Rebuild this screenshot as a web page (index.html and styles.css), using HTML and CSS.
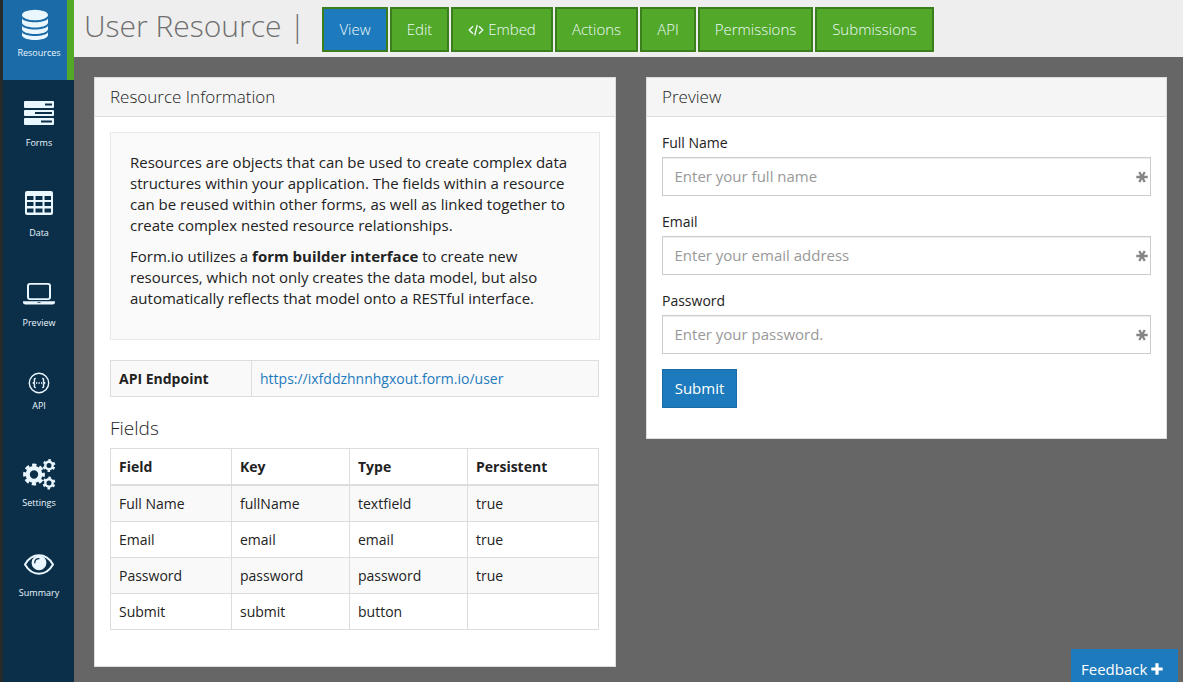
FILE: index.html
```html
<!DOCTYPE html>
<html lang="en">
<head>
<meta charset="utf-8">
<title>User Resource</title>
<link rel="stylesheet" href="styles.css">
</head>
<body>
<div class="app">
  <nav class="sidebar">
    <a class="side-item active">
      <svg class="icon" width="32" height="32" viewBox="0 0 32 32" fill="currentColor"><ellipse cx="16" cy="6" rx="13" ry="5.200"/><path d="M3 9.500c3 5 23 5 26 0V14c-2 6-24 6-26 0zM3 16.700c3 5 23 5 26 0v3.800c-2 6-24 6-26 0zM3 23.200c3 5 23 5 26 0v3.300c-2 6-24 6-26 0z"/></svg>
      <span>Resources</span>
    </a>
    <a class="side-item">
      <svg class="icon" width="32" height="32" viewBox="0 0 32 32" fill="currentColor" fill-rule="evenodd"><path d="M2 4h28q1 0 1 1v5q0 1-1 1H2q-1 0-1-1V5q0-1 1-1zM22 6.500v2h7v-2zM2 13h28q1 0 1 1v4q0 1-1 1H2q-1 0-1-1v-4q0-1 1-1zM12 15v2h17v-2zM2 21h28q1 0 1 1v5q0 1-1 1H2q-1 0-1-1v-5q0-1 1-1zM18 23.500v2h11v-2z"/></svg>
      <span>Forms</span>
    </a>
    <a class="side-item">
      <svg class="icon" width="32" height="32" viewBox="0 0 32 32" fill="currentColor" fill-rule="evenodd"><path d="M4 4h24q2 0 2 2v20q0 2-2 2H4q-2 0-2-2V6q0-2 2-2zM4 9v4h6.500V9zM12.500 9v4h7V9zM21.500 9v4H28V9zM4 15v4h6.500v-4zM12.500 15v4h7v-4zM21.500 15v4H28v-4zM4 21.500v4h6.500v-4zM12.500 21.500v4h7v-4zM21.500 21.500v4H28v-4z"/></svg>
      <span>Data</span>
    </a>
    <a class="side-item">
      <svg class="icon" width="32" height="32" viewBox="0 0 32 32" fill="currentColor" fill-rule="evenodd"><path d="M7 6h18q3 0 3 3v11q0 3-3 3H7q-3 0-3-3V9q0-3 3-3zM7 7.700Q6 7.700 6 9v11q0 1.300 1 1.300h18q1 0 1-1.300V9q0-1.300-1-1.300zM0 24.300h32v1.200q0 2-2.500 2h-27Q0 27.500 0 25.500zM14.500 25.200v.8h3v-.8z"/></svg>
      <span>Preview</span>
    </a>
    <a class="side-item side-api">
      <svg class="icon" width="22" height="22" viewBox="0 0 22 22" fill="none" stroke="currentColor" stroke-width="1.400"><circle cx="11" cy="11" r="9.700"/><path d="M7.800 6.500C5.800 6.500 6.500 8 6.500 9.200S6 11 4.700 11c1.300 0 1.800.6 1.800 1.800s-.7 2.700 1.300 2.700M14.200 6.500c2 0 1.300 1.500 1.300 2.700S16 11 17.300 11c-1.300 0-1.800.6-1.800 1.800s.7 2.700-1.300 2.700"/><path d="M8 11h6.500" stroke-dasharray="1.300 1.200"/></svg>
      <span>API</span>
    </a>
    <a class="side-item side-settings">
      <svg class="icon" width="34" height="32" viewBox="0 0 34 32" fill="none" stroke="currentColor">
        <circle cx="12" cy="16.500" r="6.300" stroke-width="4.200"/><circle cx="12" cy="16.500" r="9.200" stroke-width="3.400" stroke-dasharray="4.200 3.026" stroke-dashoffset="2.100"/>
        <circle cx="27" cy="7.500" r="3.700" stroke-width="2.400"/><circle cx="27" cy="7.500" r="5.400" stroke-width="2" stroke-dasharray="2.600 3.055" stroke-dashoffset="-1.500"/>
        <circle cx="27" cy="25" r="3.700" stroke-width="2.400"/><circle cx="27" cy="25" r="5.400" stroke-width="2" stroke-dasharray="2.600 3.055" stroke-dashoffset="-1.500"/>
      </svg>
      <span>Settings</span>
    </a>
    <a class="side-item side-summary">
      <svg class="icon" width="32" height="32" viewBox="0 0 32 32" fill="none" stroke="currentColor"><path d="M2 16.500C9 4.200 23 4.200 30 16.500 23 28.800 9 28.800 2 16.500z" stroke-width="2"/><circle cx="16" cy="14.800" r="7.400" fill="currentColor" stroke="none"/><path class="glint" d="M11.800 14.800q0-4.200 4.200-4.200" stroke-width="1.300" stroke-linecap="round"/></svg>
      <span>Summary</span>
    </a>
  </nav>
  <div class="main">
    <header class="topbar">
      <h1>User Resource |</h1>
      <div class="tabs">
        <a class="tab current w-view">View</a>
        <a class="tab w-edit">Edit</a>
        <a class="tab w-embed"><svg width="16" height="12" viewBox="0 0 16 12" fill="none" stroke="currentColor" stroke-width="1.300"><path d="M5 2.200L1.200 6 5 9.800M11 2.200L14.800 6 11 9.800M9.300 .8L6.700 11.500"/></svg><span>Embed</span></a>
        <a class="tab w-actions">Actions</a>
        <a class="tab w-api">API</a>
        <a class="tab w-perm">Permissions</a>
        <a class="tab w-sub">Submissions</a>
      </div>
    </header>
    <main class="content">
      <section class="panel info">
        <h2 class="panel-head">Resource Information</h2>
        <div class="panel-body">
          <div class="well">
            <p>Resources are objects that can be used to create complex data<br>structures within your application. The fields within a resource<br>can be reused within other forms, as well as linked together to<br>create complex nested resource relationships.</p>
            <p>Form.io utilizes a <strong>form builder interface</strong> to create new<br>resources, which not only creates the data model, but also<br>automatically reflects that model onto a RESTful interface.</p>
          </div>
          <div class="endpoint"><strong>API Endpoint</strong><a>https://ixfddzhnnhgxout.form.io/user</a></div>
          <h3>Fields</h3>
          <div class="grid">
            <b>Field</b><b>Key</b><b>Type</b><b>Persistent</b>
            <span class="odd">Full Name</span><span class="odd">fullName</span><span class="odd">textfield</span><span class="odd">true</span>
            <span>Email</span><span>email</span><span>email</span><span>true</span>
            <span class="odd">Password</span><span class="odd">password</span><span class="odd">password</span><span class="odd">true</span>
            <span>Submit</span><span>submit</span><span>button</span><span></span>
          </div>
        </div>
      </section>
      <section class="panel preview">
        <h2 class="panel-head">Preview</h2>
        <form class="panel-body">
          <label>Full Name</label>
          <div class="field"><input placeholder="Enter your full name"><svg class="star" width="12" height="12" viewBox="0 0 12 12" stroke="currentColor" stroke-width="2.300"><path d="M.3 6h11.400M3.300 1l5.400 10M8.700 1L3.300 11"/></svg></div>
          <label>Email</label>
          <div class="field"><input placeholder="Enter your email address"><svg class="star" width="12" height="12" viewBox="0 0 12 12" stroke="currentColor" stroke-width="2.300"><path d="M.3 6h11.400M3.300 1l5.400 10M8.700 1L3.300 11"/></svg></div>
          <label>Password</label>
          <div class="field"><input placeholder="Enter your password."><svg class="star" width="12" height="12" viewBox="0 0 12 12" stroke="currentColor" stroke-width="2.300"><path d="M.3 6h11.400M3.300 1l5.400 10M8.700 1L3.300 11"/></svg></div>
          <button type="button" class="submit">Submit</button>
        </form>
      </section>
    </main>
  </div>
</div>
<a class="feedback"><span>Feedback</span><svg width="12" height="12" viewBox="0 0 12 12" stroke="currentColor" stroke-width="3.200"><path d="M6 .3v11.400M.3 6h11.400"/></svg></a>
</body>
</html>
```
FILE: styles.css
```css
* { box-sizing: border-box; }
body {
  margin: 0;
  background: #666;
  color: #222;
  font: 14px/21px "Open Sans", sans-serif;
  overflow: hidden;
}
.app { display: flex; height: 682px; }
.sidebar {
  flex: 0 0 74px;
  background: #0b2f49;
  border-left: 3px solid #262a2b;
}
.side-item {
  display: flex;
  flex-direction: column;
  align-items: center;
  height: 90px;
  padding: 17px 0 0 1px;
  color: #ebf7ff;
  font-size: 9px;
  font-weight: 500;
  line-height: 12px;
}
.side-item span { margin-top: 8px; }
.side-item.active {
  height: 80px;
  padding: 9px 0 0 8px;
  background: #1a6ba8;
  border-right: 7px solid #52a829;
}
.side-item.active span { margin-top: 6px; }
.side-item.active .icon { margin-right: 8px; }
.side-api { height: 91px; padding-top: 22px; }
.side-api span { margin-top: 6px; }
.side-settings { height: 89px; }
.side-settings span { margin-top: 7px; }
.side-summary { padding-top: 18px; }
.side-summary span { margin-top: 7px; }
.glint { stroke: #0b2f49; }
.main { flex: 1; }
.topbar {
  display: flex;
  height: 57px;
  padding-left: 10px;
  background: #eee;
}
h1 {
  width: 238px;
  margin: 0;
  font-size: 30px;
  font-weight: 300;
  line-height: 52px;
  color: #6f6f6f;
  white-space: nowrap;
}
.tabs { display: flex; gap: 2px; padding-top: 7px; }
.tab {
  display: flex;
  align-items: center;
  justify-content: center;
  gap: 4px;
  height: 45px;
  border: 2px solid #3c7d1d;
  background: #52a829;
  color: #f0fafb;
  font-size: 15px;
  font-weight: 300;
}
.tab.current { background: #1d7abd; }
.w-view { width: 66px; }
.w-edit { width: 59px; }
.w-embed { width: 102px; }
.w-actions { width: 83px; }
.w-api { width: 56px; }
.w-perm { width: 115px; }
.w-sub { width: 119px; }
.content {
  display: flex;
  align-items: flex-start;
  gap: 30px;
  padding: 20px 16px 0 20px;
}
.panel { background: #fff; border: 1px solid #ddd; }
.info { width: 522px; height: 590px; }
.preview { width: 521px; height: 362px; }
.panel-head {
  height: 39px;
  margin: 0;
  padding-left: 15px;
  background: #f5f5f5;
  border-bottom: 1px solid #ddd;
  font-size: 17px;
  font-weight: 300;
  line-height: 38px;
}
.panel-body { padding: 15px; }
.well {
  height: 208px;
  padding: 19px;
  background: #fafafa;
  border: 1px solid #e8e8e8;
  font-size: 15px;
}
.well p { margin: 0 0 10px; white-space: nowrap; }
.endpoint {
  display: grid;
  grid-template-columns: 141px 1fr;
  width: 489px;
  height: 37px;
  margin-top: 20px;
  background: #f9f9f9;
  border: 1px solid #ddd;
  line-height: 35px;
}
.endpoint > * { padding-left: 8px; }
.endpoint a { color: #1d7abd; }
.endpoint strong { border-right: 1px solid #ddd; }
h3 {
  margin: 19px 0 7px;
  font-size: 19px;
  font-weight: 300;
  line-height: 25px;
}
.grid {
  display: grid;
  grid-template-columns: 121px 118px 118px 131px;
  grid-template-rows: 37px repeat(4, 36px);
  width: 489px;
  border: solid #ddd;
  border-width: 1px 0 0 1px;
}
.grid > * {
  padding-left: 8px;
  border: solid #ddd;
  border-width: 0 1px 1px 0;
  line-height: 35px;
}
.grid b { border-bottom-width: 2px; }
.grid .odd { background: #f9f9f9; }
label { display: block; height: 25px; line-height: 21px; }
.field { position: relative; height: 39px; margin-bottom: 15px; }
input {
  display: block;
  width: 100%;
  height: 39px;
  padding: 0 12px 2px 11.5px;
  border: 1px solid #ccc;
  font: 15px "Open Sans", sans-serif;
  box-shadow: inset 0 1px 1px rgba(0, 0, 0, .075);
}
input::placeholder { color: #999; }
.star { position: absolute; right: 3px; top: 14px; color: #858585; }
.submit {
  display: block;
  width: 75px;
  height: 39px;
  padding: 0 0 2px;
  border: 1px solid #196ba5;
  background: #1d7abd;
  color: #fff;
  font: 15px "Open Sans", sans-serif;
}
.feedback {
  position: fixed;
  right: 5px;
  bottom: 0;
  display: flex;
  align-items: center;
  gap: 4px;
  width: 107px;
  height: 33px;
  padding: 7px 0 0 10px;
  background: #1d7abd;
  color: #fff;
  font-size: 15px;
}
```
